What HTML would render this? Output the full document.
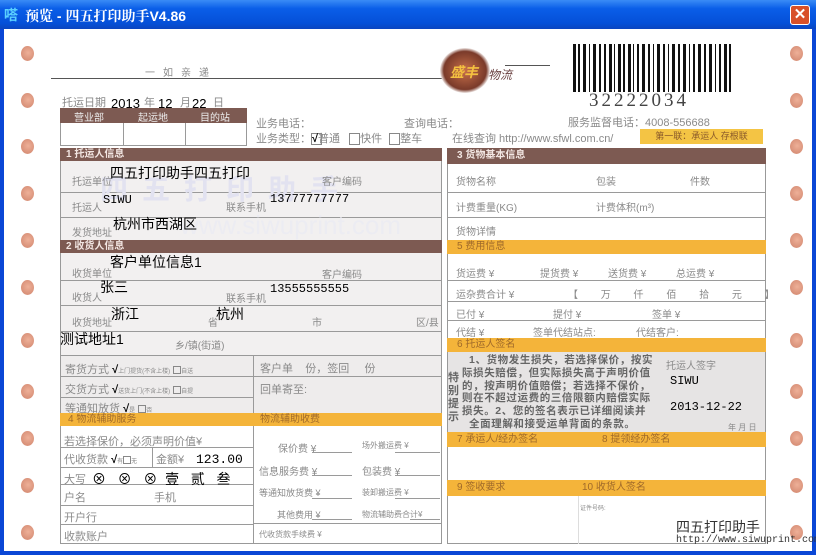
<!DOCTYPE html>
<html><head><meta charset="utf-8"><style>
*{margin:0;padding:0;box-sizing:border-box}
body{width:816px;height:555px;overflow:hidden;background:#0a47d6;font-family:"Liberation Sans","Noto Sans CJK SC",sans-serif;position:relative}
.a{position:absolute;white-space:nowrap}
.g{color:#8a8a8a;font-size:10px}
.k{color:#000;font-size:13px}
.m{font-family:"Liberation Mono","Noto Sans CJK SC",monospace}
.br{background:#7d5a52;color:#f2e6e2;font-size:10px;font-weight:bold;padding-left:6px}
.or{background:#f4b43a;color:#a06a2a;font-size:10px;padding-left:8px}
.hl{position:absolute;height:1px;background:#9a9a9a}
.vl{position:absolute;width:1px;background:#9a9a9a}
.hole{position:absolute;width:13px;height:15px;border-radius:50%;background:radial-gradient(circle at 55% 45%,#eeb098,#d89078 70%,#f4dcd0)}
.cb{display:inline-block;width:8px;height:8px;border:1px solid #888;vertical-align:middle}
</style></head><body>
<div class="a" style="left:0;top:0;width:816px;height:29px;background:linear-gradient(#3a8cf6,#0a5ee8 30%,#0550d8 80%,#0a45c0)"></div>
<div class="a" style="left:4px;top:5px;color:#5ad0ff;font-size:14px;font-weight:bold">嗒</div>
<div class="a" style="left:25px;top:6px;color:#fff;font-size:14px;font-weight:bold;font-family:'Liberation Sans','Noto Serif CJK SC',sans-serif">预览 - 四五打印助手V4.86</div>
<div class="a" style="left:790px;top:5px;width:20px;height:20px;background:#d8502a;border:1px solid #fff;border-radius:3px;color:#fff;font-size:15px;text-align:center;line-height:18px;font-weight:bold">✕</div>
<div class="a" style="left:4px;top:29px;width:808px;height:522px;background:#fff"></div>

<div class="hole" style="left:21px;top:46px"></div><div class="hole" style="left:21px;top:93px"></div><div class="hole" style="left:21px;top:139px"></div><div class="hole" style="left:21px;top:186px"></div><div class="hole" style="left:21px;top:233px"></div><div class="hole" style="left:21px;top:280px"></div><div class="hole" style="left:21px;top:333px"></div><div class="hole" style="left:21px;top:384px"></div><div class="hole" style="left:21px;top:431px"></div><div class="hole" style="left:21px;top:478px"></div><div class="hole" style="left:21px;top:525px"></div>
<div class="hole" style="left:790px;top:46px"></div><div class="hole" style="left:790px;top:93px"></div><div class="hole" style="left:790px;top:139px"></div><div class="hole" style="left:790px;top:186px"></div><div class="hole" style="left:790px;top:233px"></div><div class="hole" style="left:790px;top:280px"></div><div class="hole" style="left:790px;top:333px"></div><div class="hole" style="left:790px;top:384px"></div><div class="hole" style="left:790px;top:431px"></div><div class="hole" style="left:790px;top:478px"></div><div class="hole" style="left:790px;top:525px"></div>

<div class="a g" style="left:145px;top:64px;letter-spacing:8px">一如亲递</div>
<div class="hl" style="left:51px;top:78px;width:400px;background:#555"></div>
<div class="hl" style="left:505px;top:65px;width:45px;background:#555"></div>
<div class="a" style="left:440px;top:48px;width:50px;height:45px;border-radius:50%;background:radial-gradient(#c8704a,#7a3a2a 60%,#fff 72%)"></div>
<div class="a" style="left:450px;top:62px;color:#f4c040;font-size:14px;font-weight:bold;font-style:italic">盛丰</div>
<div class="a" style="left:488px;top:66px;color:#6a4040;font-size:12px;font-style:italic">物流</div>
<svg class="a" style="left:573px;top:44px" width="160" height="48"><g fill="#111">
<rect x="0" y="0" width="3" height="48"/><rect x="5" y="0" width="2" height="48"/><rect x="10" y="0" width="3" height="48"/><rect x="16" y="0" width="1" height="48"/><rect x="20" y="0" width="3" height="48"/><rect x="26" y="0" width="2" height="48"/><rect x="31" y="0" width="2" height="48"/><rect x="36" y="0" width="3" height="48"/><rect x="41" y="0" width="1" height="48"/><rect x="45" y="0" width="3" height="48"/><rect x="50" y="0" width="2" height="48"/><rect x="55" y="0" width="3" height="48"/><rect x="60" y="0" width="1" height="48"/><rect x="64" y="0" width="2" height="48"/><rect x="69" y="0" width="3" height="48"/><rect x="75" y="0" width="2" height="48"/><rect x="80" y="0" width="1" height="48"/><rect x="84" y="0" width="3" height="48"/><rect x="90" y="0" width="2" height="48"/><rect x="95" y="0" width="1" height="48"/><rect x="99" y="0" width="3" height="48"/><rect x="105" y="0" width="2" height="48"/><rect x="110" y="0" width="3" height="48"/><rect x="116" y="0" width="1" height="48"/><rect x="120" y="0" width="2" height="48"/><rect x="125" y="0" width="3" height="48"/><rect x="131" y="0" width="2" height="48"/><rect x="136" y="0" width="3" height="48"/><rect x="142" y="0" width="1" height="48"/><rect x="146" y="0" width="2" height="48"/><rect x="151" y="0" width="3" height="48"/><rect x="156" y="0" width="2" height="48"/>
</g></svg>
<div class="a" style="left:589px;top:90px;font-size:19px;letter-spacing:3px;color:#444;font-family:'Liberation Serif',serif">32222034</div>
<div class="a g" style="left:568px;top:114px;font-size:11px">服务监督电话：4008-556688</div>
<div class="a g" style="left:62px;top:94px;font-size:11px">托运日期</div>
<div class="a k" style="left:111px;top:96px">2013</div><div class="a g" style="left:144px;top:94px;font-size:11px">年</div>
<div class="a k" style="left:158px;top:96px">12</div><div class="a g" style="left:180px;top:94px;font-size:11px">月</div>
<div class="a k" style="left:192px;top:96px">22</div><div class="a g" style="left:213px;top:94px;font-size:11px">日</div>
<div class="a" style="left:60px;top:108px;width:187px;height:15px;background:#7d5a52"></div>
<div class="a" style="left:74px;top:109px;color:#eee;font-size:10px">营业部</div><div class="a" style="left:138px;top:109px;color:#eee;font-size:10px">起运地</div><div class="a" style="left:200px;top:109px;color:#eee;font-size:10px">目的站</div>
<div class="a" style="left:60px;top:123px;width:187px;height:23px;border:1px solid #999;border-top:none"></div>
<div class="vl" style="left:123px;top:123px;height:23px"></div><div class="vl" style="left:185px;top:123px;height:23px"></div>
<div class="a g" style="left:256px;top:115px;font-size:11px">业务电话：</div>
<div class="a g" style="left:256px;top:130px;font-size:11px">业务类型：<span class="cb" style="width:11px;height:12px"></span><b style="color:#000;margin-left:-10px">√</b>普通 <span class="cb" style="width:11px;height:12px;margin-left:6px"></span>快件 <span class="cb" style="width:11px;height:12px;margin-left:4px"></span>整车</div>
<div class="a g" style="left:404px;top:115px;font-size:11px">查询电话：</div>
<div class="a g" style="left:452px;top:130px;font-size:11px">在线查询 http://www.sfwl.com.cn/</div>
<div class="a" style="left:640px;top:129px;width:123px;height:15px;background:#f4c444;color:#8a5a2a;font-size:9px;text-align:center;line-height:15px">第一联：承运人 存根联</div>

<div class="a" style="left:60px;top:160px;width:382px;height:195px;background:#f2f0f0;border-left:1px solid #999;border-right:1px solid #999"></div>
<div class="a br" style="left:60px;top:148px;width:382px;height:13px;line-height:13px">1 托运人信息</div>
<div class="hl" style="left:60px;top:192px;width:382px"></div><div class="hl" style="left:60px;top:217px;width:382px"></div>
<div class="a br" style="left:60px;top:240px;width:382px;height:13px;line-height:13px">2 收货人信息</div>
<div class="hl" style="left:60px;top:280px;width:382px"></div><div class="hl" style="left:60px;top:305px;width:382px"></div><div class="hl" style="left:60px;top:331px;width:382px"></div>
<div class="a" style="left:100px;top:168px;font-size:28px;color:#e2e2f0;font-weight:bold;letter-spacing:14px">四五打印助手</div>
<div class="a" style="left:180px;top:210px;font-size:26px;color:#ececf2">www.siwuprint.com</div>
<div class="a g" style="left:72px;top:173px">托运单位</div><div class="a g" style="left:322px;top:173px">客户编码</div>
<div class="a g" style="left:72px;top:199px">托运人</div><div class="a g" style="left:226px;top:199px">联系手机</div>
<div class="a g" style="left:72px;top:224px">发货地址</div>
<div class="a g" style="left:72px;top:265px">收货单位</div><div class="a g" style="left:322px;top:266px">客户编码</div>
<div class="a g" style="left:72px;top:289px">收货人</div><div class="a g" style="left:226px;top:290px">联系手机</div>
<div class="a g" style="left:72px;top:314px">收货地址</div><div class="a g" style="left:208px;top:314px">省</div><div class="a g" style="left:312px;top:314px">市</div><div class="a g" style="left:416px;top:314px">区/县</div>
<div class="a g" style="left:175px;top:337px">乡/镇(街道)</div>
<div class="a k" style="left:110px;top:163px;font-size:14px">四五打印助手四五打印</div>
<div class="a k m" style="left:103px;top:193px;font-size:12px">SIWU</div>
<div class="a k m" style="left:270px;top:192px;font-size:12px">13777777777</div>
<div class="a k" style="left:113px;top:214px;font-size:14px">杭州市西湖区</div>
<div class="a k" style="left:110px;top:252px;font-size:14px">客户单位信息1</div>
<div class="a k" style="left:100px;top:277px;font-size:14px">张三</div>
<div class="a k m" style="left:270px;top:282px;font-size:12px">13555555555</div>
<div class="a k" style="left:111px;top:304px;font-size:14px">浙江</div>
<div class="a k" style="left:216px;top:304px;font-size:14px">杭州</div>
<div class="a k" style="left:60px;top:329px;font-size:14px">测试地址1</div>

<div class="a" style="left:60px;top:355px;width:382px;height:58px;background:#eeecec;border:1px solid #999;border-bottom:none"></div>
<div class="vl" style="left:253px;top:355px;height:58px"></div>
<div class="hl" style="left:60px;top:376px;width:382px"></div><div class="hl" style="left:60px;top:397px;width:193px"></div>
<div class="a g" style="left:65px;top:361px;font-size:11px">寄货方式 <b style="color:#000">√</b><span style="font-size:6px">上门提货(不含上楼)</span> <span class="cb"></span><span style="font-size:6px">自送</span></div>
<div class="a g" style="left:65px;top:381px;font-size:11px">交货方式 <b style="color:#000">√</b><span style="font-size:6px">送货上门(不含上楼)</span> <span class="cb"></span><span style="font-size:6px">自提</span></div>
<div class="a g" style="left:65px;top:400px;font-size:11px">等通知放货 <b style="color:#000">√</b><span style="font-size:6px">是</span> <span class="cb"></span><span style="font-size:6px">否</span></div>
<div class="a g" style="left:260px;top:360px;font-size:11px">客户单 &nbsp;&nbsp; 份，签回 &nbsp;&nbsp;&nbsp; 份</div>
<div class="a g" style="left:260px;top:381px;font-size:11px">回单寄至:</div>
<div class="a or" style="left:60px;top:413px;width:382px;height:13px;line-height:13px">4 物流辅助服务<span style="position:absolute;left:200px">物流辅助收费</span></div>
<div class="a" style="left:60px;top:426px;width:382px;height:118px;border:1px solid #999;border-top:none"></div>
<div class="vl" style="left:253px;top:426px;height:118px"></div>
<div class="hl" style="left:60px;top:447px;width:193px"></div><div class="hl" style="left:60px;top:467px;width:193px"></div><div class="hl" style="left:60px;top:484px;width:193px"></div><div class="hl" style="left:60px;top:505px;width:193px"></div><div class="hl" style="left:60px;top:524px;width:193px"></div><div class="hl" style="left:253px;top:523px;width:189px"></div>
<div class="vl" style="left:152px;top:447px;height:20px"></div>
<div class="a g" style="left:64px;top:433px;font-size:11px">若选择保价，必须声明价值¥</div>
<div class="a g" style="left:64px;top:451px;font-size:11px">代收货款 <b style="color:#000">√</b><span style="font-size:6px">有</span><span class="cb"></span><span style="font-size:6px">无</span></div>
<div class="a g" style="left:156px;top:451px;font-size:11px">金额¥</div>
<div class="a k m" style="left:196px;top:452px;font-size:13px">123.00</div>
<div class="a g" style="left:64px;top:471px;font-size:11px">大写</div>
<div class="a k" style="left:92px;top:469px;font-size:14px">⊗ &nbsp;&nbsp;⊗ &nbsp;&nbsp;⊗ &nbsp;壹 &nbsp;&nbsp;贰 &nbsp;&nbsp;叁</div>
<div class="a g" style="left:64px;top:489px;font-size:11px">户名</div><div class="a g" style="left:154px;top:489px;font-size:11px">手机</div>
<div class="a g" style="left:64px;top:509px;font-size:11px">开户行</div>
<div class="a g" style="left:64px;top:528px;font-size:11px">收款账户</div>
<div class="a g" style="left:278px;top:440px">保价费 ¥</div><div class="a g" style="left:362px;top:440px;font-size:8px">场外搬运费 ¥</div>
<div class="a g" style="left:259px;top:463px">信息服务费 ¥</div><div class="a g" style="left:362px;top:463px">包装费 ¥</div>
<div class="a g" style="left:259px;top:486px;font-size:9px">等通知放货费 ¥</div><div class="a g" style="left:362px;top:487px;font-size:8px">装卸搬运费 ¥</div>
<div class="a g" style="left:277px;top:508px;font-size:9px">其他费用 ¥</div><div class="a g" style="left:362px;top:509px;font-size:8px">物流辅助费合计¥</div>
<div class="a g" style="left:259px;top:529px;font-size:8px">代收货款手续费 ¥</div>
<div class="hl" style="left:312px;top:452px;width:40px"></div><div class="hl" style="left:395px;top:452px;width:45px"></div>
<div class="hl" style="left:312px;top:475px;width:40px"></div><div class="hl" style="left:395px;top:475px;width:45px"></div>
<div class="hl" style="left:312px;top:498px;width:40px"></div><div class="hl" style="left:395px;top:498px;width:45px"></div>
<div class="hl" style="left:312px;top:519px;width:40px"></div><div class="hl" style="left:410px;top:519px;width:30px"></div>

<div class="a br" style="left:447px;top:148px;width:319px;height:16px;line-height:16px;padding-left:10px">3 货物基本信息</div>
<div class="a" style="left:447px;top:164px;width:319px;height:380px;border:1px solid #999;border-top:none"></div>
<div class="hl" style="left:447px;top:192px;width:319px"></div><div class="hl" style="left:447px;top:217px;width:319px"></div>
<div class="a g" style="left:456px;top:173px">货物名称</div><div class="a g" style="left:596px;top:173px">包装</div><div class="a g" style="left:690px;top:173px">件数</div>
<div class="a g" style="left:456px;top:199px">计费重量(KG)</div><div class="a g" style="left:596px;top:199px">计费体积(m³)</div>
<div class="a g" style="left:456px;top:223px">货物详情</div>
<div class="a or" style="left:447px;top:240px;width:319px;height:14px;line-height:14px;padding-left:10px">5 费用信息</div>
<div class="hl" style="left:447px;top:280px;width:319px"></div><div class="hl" style="left:447px;top:301px;width:319px"></div><div class="hl" style="left:447px;top:320px;width:319px"></div>
<div class="a g" style="left:456px;top:265px">货运费 ¥</div><div class="a g" style="left:540px;top:265px">提货费 ¥</div><div class="a g" style="left:608px;top:265px">送货费 ¥</div><div class="a g" style="left:676px;top:265px">总运费 ¥</div>
<div class="a g" style="left:456px;top:286px">运杂费合计 ¥</div><div class="a g" style="left:568px;top:286px;word-spacing:20px">【 万 仟 佰 拾 元 】</div>
<div class="a g" style="left:456px;top:306px">已付 ¥</div><div class="a g" style="left:553px;top:306px">提付 ¥</div><div class="a g" style="left:652px;top:306px">签单 ¥</div>
<div class="a g" style="left:456px;top:324px">代结 ¥</div><div class="a g" style="left:533px;top:324px">签单代结站点:</div><div class="a g" style="left:636px;top:324px">代结客户:</div>
<div class="a or" style="left:447px;top:338px;width:319px;height:14px;line-height:14px;padding-left:10px">6 托运人签名</div>
<div class="a" style="left:448px;top:352px;width:317px;height:80px;background:#e6e4e4"></div>
<div class="a" style="left:448px;top:372px;width:12px;font-size:11px;line-height:13px;color:#666;font-weight:bold;white-space:normal">特别提示</div>
<div class="a" style="left:462px;top:354px;font-size:10.5px;line-height:12.8px;color:#666;font-weight:bold;letter-spacing:0.6px">&nbsp;&nbsp;1、货物发生损失，若选择保价，按实<br>际损失赔偿，但实际损失高于声明价值<br>的，按声明价值赔偿；若选择不保价，<br>则在不超过运费的三倍限额内赔偿实际<br>损失。2、您的签名表示已详细阅读并<br>&nbsp;&nbsp;全面理解和接受运单背面的条款。</div>
<div class="a g" style="left:666px;top:357px">托运人签字</div>
<div class="a k m" style="left:670px;top:374px;font-size:12px">SIWU</div>
<div class="a k m" style="left:670px;top:400px;font-size:12px">2013-12-22</div>
<div class="a g" style="left:728px;top:422px;font-size:8px">年 月 日</div>
<div class="a or" style="left:447px;top:432px;width:319px;height:15px;line-height:15px;padding-left:10px">7 承运人/经办签名<span style="position:absolute;left:155px">8 提领经办签名</span></div>
<div class="a or" style="left:447px;top:480px;width:319px;height:16px;line-height:16px;padding-left:10px">9 签收要求<span style="position:absolute;left:135px">10 收货人签名</span></div>
<div class="vl" style="left:578px;top:496px;height:48px;background:#ddd"></div>
<div class="a g" style="left:580px;top:503px;font-size:6px">证件号码:</div>
<div class="a" style="left:676px;top:517px;font-size:14px;color:#333">四五打印助手</div>
<div class="a m" style="left:676px;top:535px;font-size:10px;color:#333">http://www.siwuprint.com</div>
</body></html>
